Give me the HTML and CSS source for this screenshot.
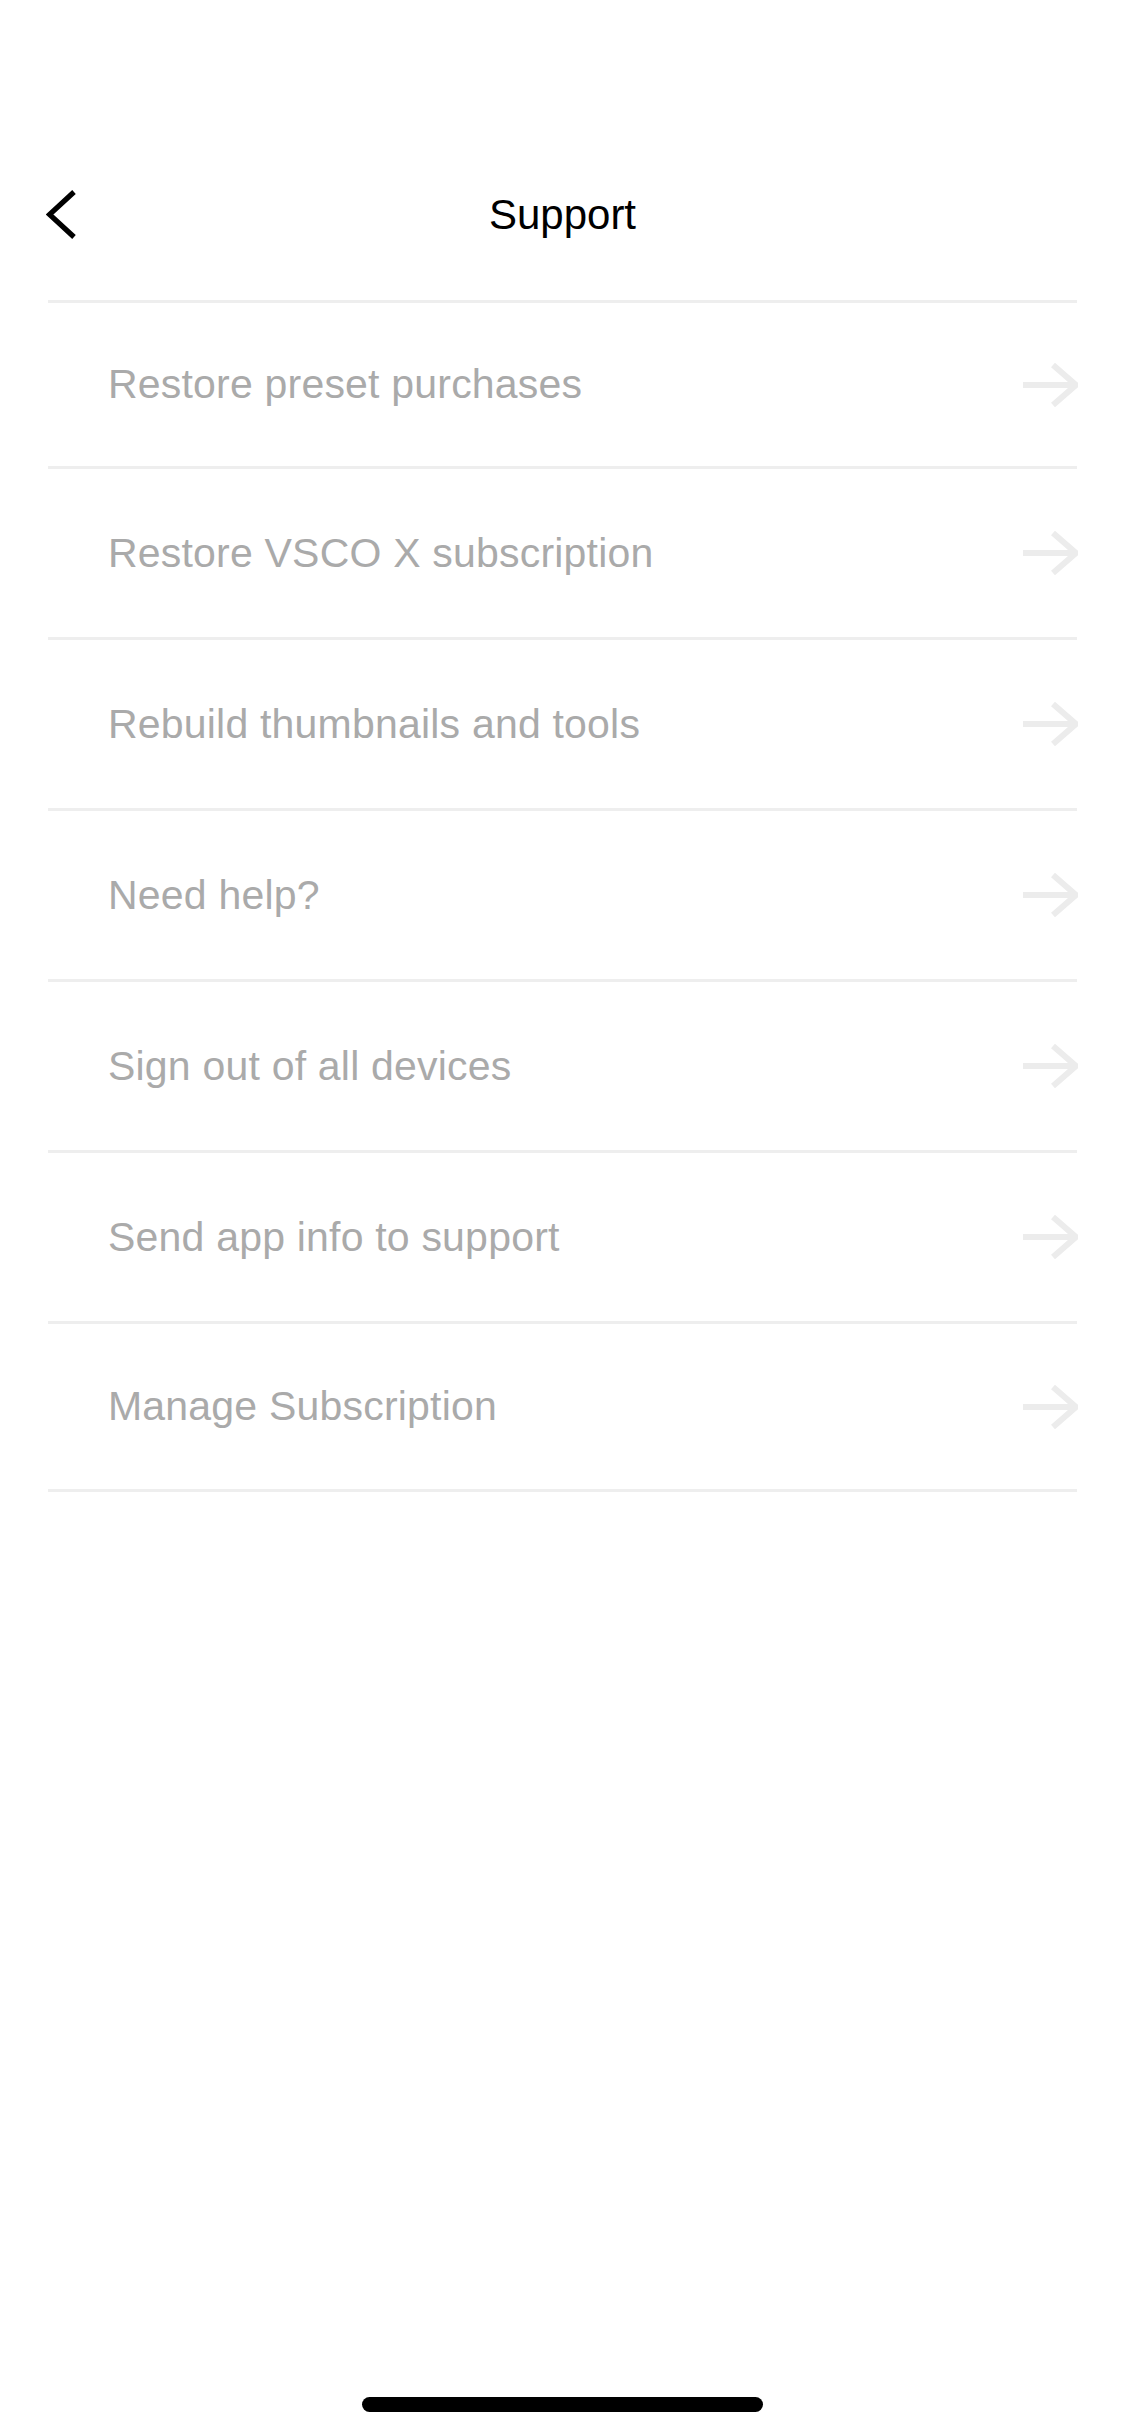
FILE: index.html
```html
<!DOCTYPE html>
<html lang="en">
<head>
    <meta charset="UTF-8">
    <meta name="viewport" content="width=device-width, initial-scale=1.0">
    <title>Support</title>
    <link rel="stylesheet" href="styles.css">
</head>
<body>
    <div class="screen">
        <div class="topbar">
            <div class="nav">
                <a class="back" href="#">
                    <svg width="32" height="50" viewBox="0 0 32 50">
                        <polyline points="28,2 3.5,24.5 28,47" fill="none" stroke="#000" stroke-width="5.2"/>
                    </svg>
                </a>
                <h1 class="title">Support</h1>
                <span></span>
            </div>
        </div>

        <ul class="menu">
            <li class="menu-row"><span>Restore preset purchases</span><svg class="arrow" width="56" height="44" viewBox="0 0 56 44"><path d="M1 22 H54 M31 2 L54 22 L31 42" fill="none" stroke="#ececec" stroke-width="6"/></svg></li>
            <li class="menu-row"><span>Restore VSCO X subscription</span><svg class="arrow" width="56" height="44" viewBox="0 0 56 44"><path d="M1 22 H54 M31 2 L54 22 L31 42" fill="none" stroke="#ececec" stroke-width="6"/></svg></li>
            <li class="menu-row"><span>Rebuild thumbnails and tools</span><svg class="arrow" width="56" height="44" viewBox="0 0 56 44"><path d="M1 22 H54 M31 2 L54 22 L31 42" fill="none" stroke="#ececec" stroke-width="6"/></svg></li>
            <li class="menu-row"><span>Need help?</span><svg class="arrow" width="56" height="44" viewBox="0 0 56 44"><path d="M1 22 H54 M31 2 L54 22 L31 42" fill="none" stroke="#ececec" stroke-width="6"/></svg></li>
            <li class="menu-row"><span>Sign out of all devices</span><svg class="arrow" width="56" height="44" viewBox="0 0 56 44"><path d="M1 22 H54 M31 2 L54 22 L31 42" fill="none" stroke="#ececec" stroke-width="6"/></svg></li>
            <li class="menu-row"><span>Send app info to support</span><svg class="arrow" width="56" height="44" viewBox="0 0 56 44"><path d="M1 22 H54 M31 2 L54 22 L31 42" fill="none" stroke="#ececec" stroke-width="6"/></svg></li>
            <li class="menu-row"><span>Manage Subscription</span><svg class="arrow" width="56" height="44" viewBox="0 0 56 44"><path d="M1 22 H54 M31 2 L54 22 L31 42" fill="none" stroke="#ececec" stroke-width="6"/></svg></li>
        </ul>

        <div class="home-bar"></div>
    </div>
</body>
</html>
```

FILE: styles.css
```css
body {
    margin: 0;
    background: #fff;
    font-family: "Liberation Sans", Arial, sans-serif;
}
.screen {
    width: 1125px;
    min-height: 2436px;
    display: flex;
    flex-direction: column;
}
.topbar {
    height: 300px;
    padding-top: 130px;
    box-sizing: border-box;
}
.nav {
    height: 170px;
    padding: 0 46px;
    display: grid;
    grid-template-columns: 1fr auto 1fr;
    align-items: center;
}
.back {
    display: flex;
}
.title {
    margin: 0;
    font-size: 42px;
    font-weight: normal;
    color: #000;
}
.menu {
    list-style: none;
    margin: 0 48px;
    padding: 0;
    border-top: 3px solid #eeeeee;
}
.menu-row {
    height: 168px;
    padding-left: 60px;
    display: flex;
    align-items: center;
    justify-content: space-between;
    border-bottom: 3px solid #eeeeee;
    font-size: 41px;
    letter-spacing: 0.2px;
    color: #aaaaaa;
}
.menu-row:first-child {
    height: 163px;
}
.menu-row:last-child {
    height: 165px;
}
.arrow {
    margin-right: -1px;
}
.home-bar {
    margin: auto auto 24px;
    width: 401px;
    height: 15px;
    border-radius: 8px;
    background: #000;
}
```
